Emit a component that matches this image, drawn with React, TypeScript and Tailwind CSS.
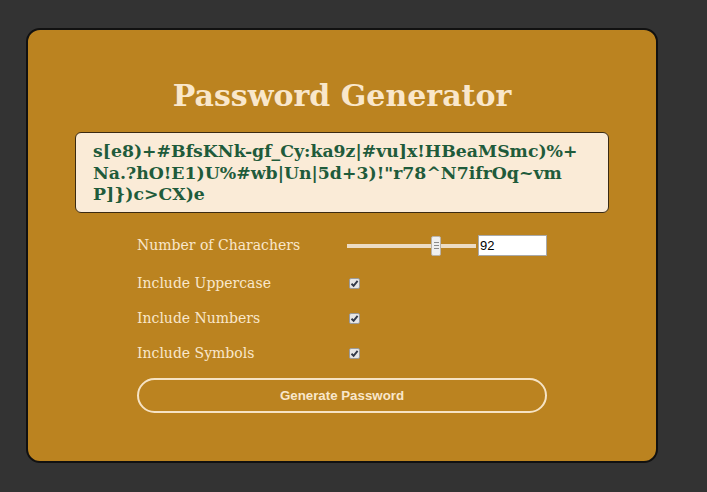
import React from 'react';

const password = [
  's[e8)+#BfsKNk-gf_Cy:ka9z|#vu]x!HBeaMSmc)%+',
  'Na.?hO!E1)U%#wb|Un|5d+3)!"r78^N7ifrOq~vm',
  'P]})c>CX)e',
];

const serif = "font-['DejaVu_Serif',serif]";

const Check = () => (
  <span className="flex h-[11px] w-[11px] items-center justify-center rounded-[2px] border border-[#9a9a9a] bg-[#e6e6e6]">
    <svg width="9" height="9" viewBox="0 0 9 9">
      <path d="M1.5 4.8 L3.6 6.8 L7.6 1.8" fill="none" stroke="#333a48" strokeWidth="1.9" />
    </svg>
  </span>
);

const App: React.FC = () => {
  const options = ['Include Uppercase', 'Include Numbers', 'Include Symbols'];

  return (
    <div className="min-h-[492px] w-full bg-[#333333] pt-[28px] pl-[26px]">
      <div className="h-[435px] w-[632px] rounded-[14px] border-2 border-[#111] bg-[#bb8320]">
        <h1 className={`${serif} mt-[48px] text-center text-[30px] font-bold leading-[36px] text-[#f9e7cb]`}>
          Password Generator
        </h1>

        {/* Password output */}
        <div className={`${serif} mx-auto mt-[18px] h-[81px] w-[534px] rounded-[6px] border border-[#3a2a12] bg-[#faebd7] px-[17px] py-[8px] text-[17.3px] font-bold leading-[21.5px] text-[#1f5b3b]`}>
          {password.map((line) => (
            <div key={line}>{line}</div>
          ))}
        </div>

        {/* Options */}
        <div className={`${serif} ml-[109px] mt-[20px] w-[410px] text-[14px] text-[#f9e7cb]`}>
          <div className="flex h-[25px] items-center">
            <span className="w-[210px]">Number of Charachers</span>
            <div className="relative flex h-[20px] w-[129px] items-center">
              <div className="h-[4px] w-full bg-[#ecdcc4]" />
              <div className="absolute left-[84px] top-[0px] flex h-[20px] w-[10px] flex-col items-center justify-center gap-[2px] rounded-[2px] border border-[#b9b3aa] bg-[#efefef]">
                <span className="h-px w-[5px] bg-[#8a8a8a]" />
                <span className="h-px w-[5px] bg-[#8a8a8a]" />
                <span className="h-px w-[5px] bg-[#8a8a8a]" />
              </div>
            </div>
            <div className="ml-[2px] flex h-[21px] w-[69px] items-center border border-[#a9a9a9] bg-white pl-[1px] font-['Liberation_Sans',sans-serif] text-[13px] text-black">
              92
            </div>
          </div>
          {options.map((o, i) => (
            <div key={o} className={`${i === 0 ? 'mt-[13px]' : 'mt-[10px]'} flex h-[25px] items-center`}>
              <span className="w-[212px]">{o}</span>
              <Check />
            </div>
          ))}
        </div>

        <button className="ml-[109px] mt-[12px] flex h-[35px] w-[410px] items-center justify-center rounded-full border-2 border-[#f6e3c4] font-['Liberation_Sans',sans-serif] text-[13.3px] font-bold text-[#f9e7cb]">
          Generate Password
        </button>
      </div>
    </div>
  );
};

export default App;
